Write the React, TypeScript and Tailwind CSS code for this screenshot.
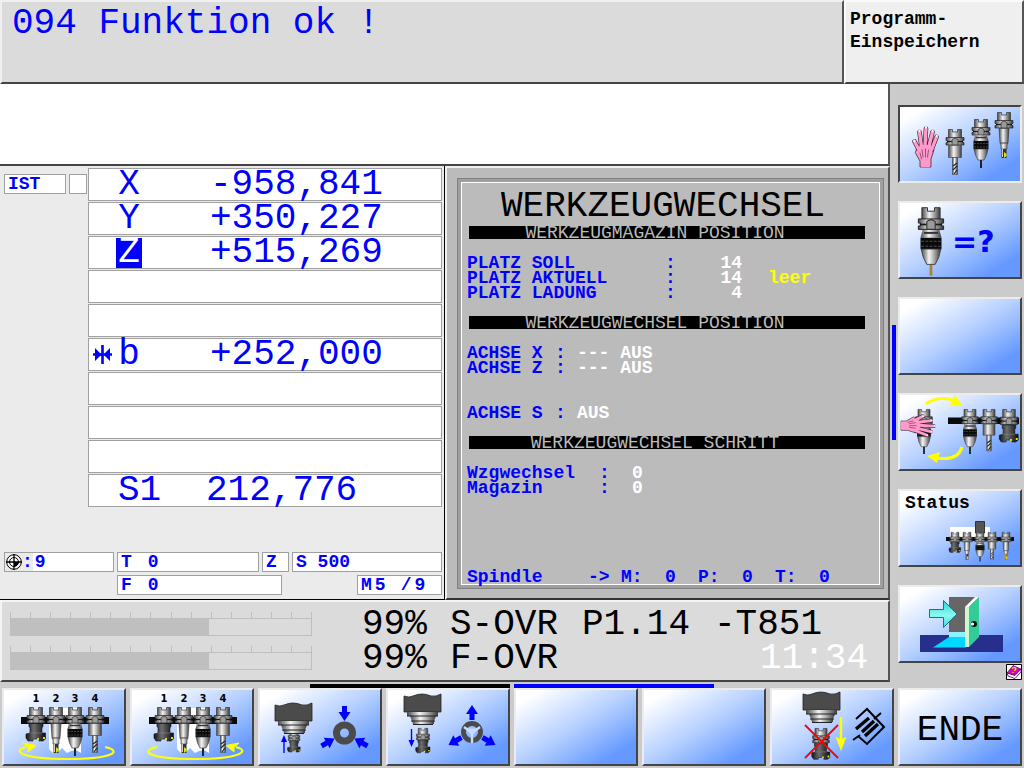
import React from "react";

type ToolProps = { x: number; y: number; s?: number; gold?: boolean };

const at = (x: number, y: number, s = 1) => `translate(${x} ${y}) scale(${s})`;

function ToolDefs() {
  return (
    <svg className="absolute h-0 w-0" aria-hidden="true">
      <defs>
        <linearGradient id="metal">
          <stop offset="0" stopColor="#4a4a4a" />
          <stop offset="0.2" stopColor="#9a9a9a" />
          <stop offset="0.4" stopColor="#f4f4f4" />
          <stop offset="0.6" stopColor="#bcbcbc" />
          <stop offset="1" stopColor="#3c3c3c" />
        </linearGradient>
        <linearGradient id="dark">
          <stop offset="0" stopColor="#141414" />
          <stop offset="0.4" stopColor="#6e6e6e" />
          <stop offset="1" stopColor="#0c0c0c" />
        </linearGradient>
        <linearGradient id="arrowCyan" x1="0" x2="0" y1="0" y2="1">
          <stop offset="0" stopColor="#1fd6d0" />
          <stop offset="0.55" stopColor="#8dfaf2" />
          <stop offset="1" stopColor="#2fe0d8" />
        </linearGradient>
      </defs>
    </svg>
  );
}

function Holder() {
  return (
    <g>
      <path d="M-6.5 0.5H-2.5V3H2.5V0.5H6.5V9H-6.5Z" fill="url(#metal)" stroke="#333" strokeWidth="0.7" />
      <path d="M-9 8.5H9V11.5H7.5V13.5H9V16H-9V13.5H-7.5V11.5H-9Z" fill="url(#metal)" stroke="#222" strokeWidth="0.7" />
      <path d="M-8 12.5H8" stroke="#1a1a1a" strokeWidth="1.2" />
      <path d="M-3 16V10.5Q0 7.5 3 10.5V16Z" fill="#9b9b9b" stroke="#333" strokeWidth="0.8" />
    </g>
  );
}

function EndMill({ x, y, s }: ToolProps) {
  return (
    <g transform={at(x, y, s)}>
      <Holder />
      <path d="M-6.5 16.5H6.5V28.5H-6.5Z" fill="url(#metal)" stroke="#444" strokeWidth="0.6" />
      <path d="M-2.5 28.5H2.5V45.5H-2.5Z" fill="url(#metal)" stroke="#444" strokeWidth="0.6" />
      <path d="M-2 37L2 34M-2 41L2 37M-1 45L2 41" stroke="#222" strokeWidth="1.2" />
    </g>
  );
}

function Chuck({ x, y, s, gold }: ToolProps) {
  return (
    <g transform={at(x, y, s)}>
      <path d="M-1 40H1V49H-1Z" fill={gold ? "#a8842c" : "#222"} />
      <Holder />
      <path d="M-6 16.5H6L7.5 22H-7.5Z" fill="url(#metal)" />
      <path d="M-5 18.5H5" stroke="#333" strokeWidth="1.4" />
      <path d="M-7.5 22H7.5V30H-7.5Z" fill="#0b0b0b" />
      <path d="M-7 24.5H7M-7 28H7" stroke="#4d4d4d" strokeWidth="0.8" strokeDasharray="2 1" />
      <path d="M-7 30H7L5.5 36L3 41H-3L-5.5 36Z" fill="url(#metal)" stroke="#333" strokeWidth="0.6" />
    </g>
  );
}

function SlimMill({ x, y, s, gold }: ToolProps) {
  return (
    <g transform={at(x, y, s)}>
      <Holder />
      <path d="M-5 16.5H5L4 31L3 33V37H-3V33L-4 31Z" fill="url(#metal)" stroke="#333" strokeWidth="0.6" />
      <path d="M-4 31H4" stroke="#444" />
      <path d="M-2.5 37H2.5V46H-2.5Z" fill={gold ? "#a0691c" : "#333"} />
      <path d="M0 40L2.5 42V44L0 46Z" fill="#e8e000" />
      <path d="M-1.5 37V45" stroke="#ccc" />
    </g>
  );
}

function FaceMill({ x, y, s }: ToolProps) {
  return (
    <g transform={at(x, y, s)}>
      <Holder />
      <path d="M-7 16.5H7V20H6V26H9.5V32L7 34H3V32H-3V34H-8L-10 31V27L-6 26V20H-7Z" fill="url(#dark)" stroke="#111" strokeWidth="0.6" />
      <path d="M-6 26H6" stroke="#888" strokeWidth="0.6" />
      <path d="M1 31H3V33H1ZM7 30H9V32H7Z" fill="#e8e000" />
    </g>
  );
}

function Hand({ transform }: { transform?: string }) {
  const fingers = "M19 43L14.500 34.500M21.500 40L19.500 25M25 39L26 21.500M29 39L32.500 25M31.500 43L36.500 30";
  const palm = "M17 41L20 37H31L34 43L31 52V60H20V54L15.500 46Z";
  return (
    <g transform={transform} strokeLinecap="round">
      <path d={palm} fill="#ff9acb" stroke="#4a2636" strokeWidth="0.8" />
      <path d={fingers} stroke="#30202a" strokeWidth="4.600" />
      <path d={fingers} stroke="#ff9acb" strokeWidth="3.400" />
      <path d="M18 42L20 38H31L33 43L30 51V60H21V53L16.500 46Z" fill="#ff9acb" />
      <path d="M22 43L23 50M25.500 42V50M28.500 43L27.500 50M20 46L21.500 52" stroke="#7c3e5c" strokeWidth="0.8" />
      <path d="M14.300 33.500V34M19.400 23.800V24.300M26 20V20.500M32.600 23.800V24.300M36.800 28.800V29.300" stroke="#fff" strokeWidth="2" />
    </g>
  );
}

function Icon({ children }: { children: React.ReactNode }) {
  return (
    <svg viewBox="0 0 120 74" className="h-[74px] w-[120px] shrink-0" fill="none" aria-hidden="true">
      {children}
    </svg>
  );
}

function Key({ label, pressed, children }: { label: string; pressed?: boolean; children?: React.ReactNode }) {
  return (
    <button
      type="button"
      aria-label={label}
      aria-pressed={pressed}
      className={
        "relative flex h-[78px] w-full min-w-0 items-center justify-center overflow-hidden border-2 bg-linear-to-br from-white from-10% via-[#b5cfff] via-50% to-[#6699ff] to-85% " +
        (pressed
          ? "border-t-[#444444] border-r-[#ececec] border-b-[#ececec] border-l-[#444444]"
          : "border-t-[#ececec] border-r-[#444444] border-b-[#444444] border-l-[#ececec]")
      }
    >
      {children}
    </button>
  );
}

function Magazine({ clockwise }: { clockwise: boolean }) {
  return (
    <Icon>
      <path d="M45 18H77V63L72 60L67 61L63 63L58 58L54 62L49 63L45 59Z" fill="#fff" />
      <path d="M17 27H105V34H17Z" fill="#0a0a0a" />
      <FaceMill x={32} y={17} />
      <SlimMill x={52} y={17} />
      <Chuck x={71} y={17} />
      <EndMill x={91} y={17} />
      <g fill="#000" fontFamily="DejaVu Sans" fontWeight="700" fontSize="10" textAnchor="middle">
        <text x="32" y="12">1</text>
        <text x="52" y="12">2</text>
        <text x="71" y="12">3</text>
        <text x="91" y="12">4</text>
      </g>
      <g transform={clockwise ? undefined : "translate(126 0) scale(-1 1)"}>
        <path d="M101 57C119 61 110 69 63 69C18 69 7 61 22 57" stroke="#ffff00" strokeWidth="2.200" />
        <path d="M19 53L32 55.500L24 62L24 57.500Z" fill="#ffff00" stroke="#ffff00" />
      </g>
    </Icon>
  );
}

function Spindle({ x, y }: { x: number; y: number }) {
  return (
    <g transform={at(x, y)}>
      <path d="M0 2Q5 4 9 2Q18 -2 27 2Q32 3 37 0V18H0Z" fill="#4b4b4b" stroke="#222" strokeWidth="0.8" />
      <path d="M3 18H34V22H3Z" fill="url(#metal)" />
      <path d="M6 22H32L30 27H8Z" fill="url(#metal)" />
      <path d="M8 27H30V30H9Z" fill="url(#metal)" />
      <path d="M3 22H34M7 27H31M9 30.500H29" stroke="#222" />
    </g>
  );
}

function BlockArrow({ x, y, turn }: { x: number; y: number; turn: number }) {
  return <path transform={`translate(${x} ${y}) rotate(${turn})`} d="M0 0L6 -9H2.500V-15H-2.500V-9H-6Z" fill="#0000ff" />;
}

const mono = "font-['Liberation_Mono','Courier_New',monospace]";
const field = "flex h-5 items-center border border-[#a0a0a0] bg-white whitespace-pre";

type Axis = { name?: string; value?: string; active?: boolean; clamped?: boolean; spindle?: boolean };

const axes: Axis[] = [
  { name: "X", value: "-958,841" },
  { name: "Y", value: "+350,227" },
  { name: "Z", value: "+515,269", active: true },
  {},
  {},
  { name: "b", value: "+252,000", clamped: true },
  {},
  {},
  {},
  { name: "S1", value: "212,776", spindle: true },
];

function AxisRow({ name, value, active, clamped, spindle }: Axis) {
  return (
    <div className="mb-px flex h-[33px] items-center border border-[#a0a0a0] bg-white text-[36px] leading-[30px] text-[#0000ff]">
      <span className="flex w-[27px] justify-center">
        {clamped && (
          <svg viewBox="0 0 19 19" className="h-[19px] w-[19px]" aria-hidden="true">
            <path d="M9.500 0V19M0 9.500H19" stroke="#0000ff" strokeWidth="2.600" />
            <path d="M2 3L8.500 9.500L2 16ZM17 3L10.500 9.500L17 16Z" fill="#0000ff" />
          </svg>
        )}
      </span>
      <span className={spindle ? "w-[90px] pl-0.5" : "w-[94px]"}>
        {name && (
          <span className={active ? "inline-block w-[26px] bg-[#0000ff] text-center text-white" : "inline-block min-w-[26px] text-center"}>
            {name}
          </span>
        )}
      </span>
      <span>{value}</span>
    </div>
  );
}

function Banner({ children }: { children: string }) {
  return (
    <h2 className="mr-[14px] ml-0.5 flex h-[13px] items-center justify-center bg-black pt-0.5 pr-6 text-[18px] leading-[13px] font-normal whitespace-pre text-[#bbbbbb]">
      {children}
    </h2>
  );
}

function Place({ label, value, note }: { label: string; value: string; note?: string }) {
  return (
    <div className="grid grid-cols-[198px_22px_55px_26px_1fr]">
      <span>{label}</span>
      <span>:</span>
      <span className="text-right text-white">{value}</span>
      <span />
      <span className="text-[#ffff00]">{note}</span>
    </div>
  );
}

function AxisState({ label, value }: { label: string; value: string }) {
  return (
    <div className="grid grid-cols-[88px_22px_1fr]">
      <span>{label}</span>
      <span>:</span>
      <span className="text-white">{value}</span>
    </div>
  );
}

function StepState({ label, value }: { label: string; value: string }) {
  return (
    <div className="grid grid-cols-[132px_33px_1fr]">
      <span>{label}</span>
      <span>:</span>
      <span className="text-white">{value}</span>
    </div>
  );
}

function SpindleValue({ label, value }: { label: string; value: string }) {
  return (
    <span className="flex w-[77px]">
      <span className="w-11">{label}</span>
      <span>{value}</span>
    </span>
  );
}

function Gauge({ label, value }: { label: string; value: number }) {
  return (
    <div role="meter" aria-label={label} aria-valuenow={value} aria-valuemin={0} aria-valuemax={150} className="w-[302px]">
      <div className="flex h-[6px] justify-between">
        {Array.from({ length: 16 }, (_, i) => (
          <span key={i} className="w-px bg-[#bfbfbf]" />
        ))}
      </div>
      <div className="h-[18px] border border-[#bfbfbf]">
        <div className="h-full bg-[#bfbfbf]" style={{ width: `${(value / 150) * 100}%` }} />
      </div>
    </div>
  );
}

export default function App() {
  return (
    <div className={`${mono} flex min-h-screen w-full flex-col bg-[#cbcbcb] text-black`}>
      <ToolDefs />

      <header className="flex h-[84px] w-full">
        <div className="flex-1 border-t-2 border-r-2 border-b-2 border-l-2 border-t-[#f0f0f0] border-r-[#555555] border-b-[#444444] border-l-[#f0f0f0] bg-[#dbdbdb] pt-1 pl-2.5">
          <h1 className="text-[36px] leading-[36px] whitespace-pre text-[#0000ff]">094 Funktion ok !</h1>
        </div>
        <div className="w-[180px] border-t-2 border-r-2 border-b-2 border-l-2 border-t-[#fafafa] border-r-[#555555] border-b-[#444444] border-l-[#fafafa] bg-[#efefef] pt-1.5 pl-1 text-[18px] leading-[23px] font-bold">
          Programm-
          <br />
          Einspeichern
        </div>
      </header>

      <div className="flex w-full">
        <main className="flex min-w-0 flex-1 flex-col">
          <div className="h-[82px] border-r-2 border-b-2 border-r-[#555555] border-b-[#444444] bg-white" />

          <div className="grid grid-cols-2">
            <section className="flex min-w-0 flex-col border-r border-b border-black bg-[#ebebeb] pt-0.5 pb-1" aria-label="Positionsanzeige">
              <div className="flex pr-0.5">
                <div className="flex w-[88px] gap-[3px] pt-1.5 pl-1">
                  <div className={`${field} w-[62px] pl-[3px] text-[18px] font-bold text-[#0000ff]`}>IST</div>
                  <div className={`${field} w-[18px]`} />
                </div>
                <div className="flex-1">
                  {axes.map((a, i) => (
                    <AxisRow key={i} {...a} />
                  ))}
                </div>
              </div>
              <div className="mt-11 flex flex-col gap-[3px] pr-0.5 pl-1 text-[18px] leading-[18px] font-bold text-[#0000ff]">
                <div className="flex gap-[3px]">
                  <div className={`${field} w-[110px]`}>
                    <span className="flex h-full items-center bg-[#ebebeb] pl-px">
                      <svg viewBox="0 0 16 16" className="h-4 w-4" fill="none" aria-hidden="true">
                        <circle cx="8" cy="8" r="7.300" stroke="#000" fill="#fff" />
                        <circle cx="8" cy="8" r="4.500" stroke="#000" />
                        <path d="M8 8H12.500A4.500 4.500 0 0 1 8 12.500Z" fill="#000" />
                        <path d="M8 0V16M0 8H16" stroke="#000" strokeWidth="1.300" />
                      </svg>
                      <span>:</span>
                    </span>
                    <span className="pl-0.5">9</span>
                  </div>
                  <div className={`${field} w-[142px] gap-4 pl-[3px]`}>
                    <span>T</span>
                    <span>0</span>
                  </div>
                  <div className={`${field} w-[27px] pl-[3px]`}>Z</div>
                  <div className={`${field} flex-1 pl-[3px]`}>S 500</div>
                </div>
                <div className="flex justify-between pl-[113px]">
                  <div className={`${field} w-[165px] gap-4 pl-[3px]`}>
                    <span>F</span>
                    <span>0</span>
                  </div>
                  <div className={`${field} w-[85px] gap-[3px] pl-[3px]`}>
                    <span>M</span>
                    <span>5</span>
                    <span className="pl-[12px]">/</span>
                    <span>9</span>
                  </div>
                </div>
              </div>
            </section>

            <section className="flex min-w-0 flex-col border-2 border-t-[#f0f0f0] border-r-[#555555] border-b-[#333333] border-l-[#f0f0f0] bg-[#bbbbbb] pt-2.5 pr-1 pb-[9px] pl-2.5" aria-label="Werkzeugwechsel">
              <div className="flex flex-1 border border-[#808080] bg-[#9f9f9f] p-[3px]">
                <div className="min-w-0 flex-1 border border-white bg-[#bbbbbb] pl-[5px] text-[18px] leading-[15px] font-bold text-[#0000ff]">
                  <div className="h-[43px] pt-[7px] pl-[34px] text-[36px] leading-[34px] font-normal text-black">WERKZEUGWECHSEL</div>
                  <Banner>WERKZEUGMAGAZIN POSITION</Banner>
                  <div className="pt-[17px]">
                    <Place label="PLATZ SOLL" value="14" />
                    <Place label="PLATZ AKTUELL" value="14" note="leer" />
                    <Place label="PLATZ LADUNG" value="4" />
                  </div>
                  <div className="pt-[15px]">
                    <Banner>WERKZEUGWECHSEL POSITION</Banner>
                  </div>
                  <div className="pt-[17px]">
                    <AxisState label="ACHSE X" value="--- AUS" />
                    <AxisState label="ACHSE Z" value="--- AUS" />
                  </div>
                  <div className="pt-[30px]">
                    <AxisState label="ACHSE S" value="AUS" />
                  </div>
                  <div className="pt-[15px]">
                    <Banner>WERKZEUGWECHSEL SCHRITT</Banner>
                  </div>
                  <div className="pt-[17px]">
                    <StepState label="Wzgwechsel" value="0" />
                    <StepState label="Magazin" value="0" />
                  </div>
                  <div className="flex pt-[75px] leading-[13px]">
                    <span className="w-[121px]">Spindle</span>
                    <span className="w-[33px]">-&gt;</span>
                    <SpindleValue label="M:" value="0" />
                    <SpindleValue label="P:" value="0" />
                    <SpindleValue label="T:" value="0" />
                  </div>
                </div>
              </div>
            </section>
          </div>

          <section className="flex border-2 border-t-[#f4f4f4] border-r-[#555555] border-b-[#444444] border-l-[#f4f4f4] bg-[#dbdbdb] pb-1 pl-2" aria-label="Override">
            <div className="flex w-[352px] flex-col gap-[10px] pt-2.5">
              <Gauge label="S-OVR" value={99} />
              <Gauge label="F-OVR" value={99} />
            </div>
            <div className="grid flex-1 grid-cols-[88px_132px_132px_1fr] pt-1.5 text-[36px] leading-[34px] whitespace-pre">
              <span>99%</span>
              <span>S-OVR</span>
              <span>P1.14</span>
              <span>-T851</span>
              <span>99%</span>
              <span>F-OVR</span>
              <time className="col-span-2 pr-5 text-right text-white">11:34</time>
            </div>
          </section>

          <div className="flex gap-1 pt-0.5 pl-[310px]">
            <span className="h-1 w-[200px] bg-black" />
            <span className="h-1 w-[200px] bg-[#0000ff]" />
          </div>
        </main>

        <aside className="flex w-[134px] pr-0.5 pb-2">
          <div className="w-2 pt-[241px] pl-0.5">
            <div className="h-[115px] w-1 bg-[#0000ff]" />
          </div>
          <div className="flex flex-1 flex-col gap-[18px] pt-[21px]">
            <Key label="Werkzeuge von Hand" pressed>
              <Icon>
                <Hand />
                <EndMill x={55} y={22} />
                <Chuck x={81} y={12} />
                <SlimMill x={104} y={5} />
              </Icon>
            </Key>
            <Key label="Werkzeug abfragen">
              <svg viewBox="0 0 50 74" className="h-[74px] w-[50px] shrink-0" fill="none" aria-hidden="true">
                <Chuck x={31} y={4} s={1.4} gold />
              </svg>
              <span className="flex-1 pt-1 pl-0.5 text-left font-['DejaVu_Sans',sans-serif] text-[30px] leading-[36px] font-bold text-[#0000ff]">=?</span>
            </Key>
            <Key label="Frei" />
            <Key label="Werkzeug von Hand wechseln">
              <Icon>
                <path d="M48 22.500H119V29H48Z" fill="#0a0a0a" />
                <Chuck x={24} y={14} s={0.92} />
                <Hand transform="translate(52 9) rotate(90) scale(.85)" />
                <Chuck x={70} y={14} s={0.92} />
                <EndMill x={89} y={14} s={0.92} />
                <FaceMill x={109} y={14} s={0.97} />
                <path d="M26 9Q39 0 55 6M62 52Q58 66 38 63" stroke="#ffff00" strokeWidth="3" />
                <path d="M55 0L62 10L50 10ZM27 61L40 57L37 68Z" fill="#ffff00" />
              </Icon>
            </Key>
            <Key label="Status">
              <Icon>
                <path d="M50 36H90V46H50Z" fill="#fff" />
                <path d="M75.500 30.500H84.500V42H75.500Z" fill="#555" stroke="#333" />
                <path d="M46 46H114V50H46Z" fill="#0a0a0a" />
                <FaceMill x={55} y={41} s={0.6} />
                <SlimMill x={67} y={41} s={0.6} />
                <Chuck x={80} y={41} s={0.6} />
                <EndMill x={92} y={41} s={0.6} />
                <SlimMill x={106} y={41} s={0.6} gold />
              </Icon>
              <span className="absolute top-0.5 left-[5px] text-[18px] leading-5 font-bold">Status</span>
            </Key>
            <div className="flex flex-col items-end">
              <Key label="Verlassen">
                <Icon>
                  <path d="M20 48H103V65H20Z" fill="#26308c" />
                  <path d="M49 10H79V45H49Z" fill="#666" />
                  <path d="M49 45H66V50H49Z" fill="#8ff0ff" />
                  <path d="M49 50H66V60.500H33Z" fill="#00d8ff" />
                  <path d="M65 20L75 10H79L69 20Z" fill="#fff" />
                  <path d="M65 20H69V60H65Z" fill="#cdf7cf" />
                  <path d="M69 20L79 10.500V50L69 60Z" fill="#33cc99" />
                  <circle cx="74" cy="37" r="3" fill="#111" />
                  <circle cx="72.500" cy="37" r="1.600" fill="#fff" />
                  <path d="M29.500 22.500H43.500V13.500L57 27L43.500 40.500V30.500H29.500Z" fill="url(#arrowCyan)" stroke="#2a6a86" />
                </Icon>
              </Key>
              <svg viewBox="0 0 16 16" className="mt-px h-4 w-4" fill="none" aria-label="Hilfe">
                <path d="M0.500 0.500H15.500V15.500H0.500Z" fill="#fff" stroke="#000" />
                <path d="M1 9L7 1.500L15 5L9 11.500Z" fill="#d400c8" stroke="#400040" strokeWidth="0.600" />
                <path d="M1 9L9 11.500L15 5V8L9 14.500L2 12Z" fill="#fff" stroke="#700070" strokeWidth="0.900" />
                <path d="M6 4.500Q9 2.500 10 4.500Q10 6 8 6.500M7 8V9" stroke="#ffee00" strokeWidth="1.200" />
              </svg>
            </div>
          </div>
        </aside>
      </div>

      <nav className="grid grid-cols-8 gap-1 px-0.5" aria-label="Softkeys">
        <Key label="Magazin links drehen">
          <Magazine clockwise />
        </Key>
        <Key label="Magazin rechts drehen">
          <Magazine clockwise={false} />
        </Key>
        <Key label="Werkzeug spannen">
          <Icon>
            <FaceMill x={34} y={40} s={0.65} />
            <Spindle x={15} y={13} />
            <path d="M24 63V50" stroke="#0000ff" strokeWidth="1.400" />
            <path d="M24 45L27 52H21Z" fill="#0000ff" />
            <circle cx="84.500" cy="43" r="8" stroke="#4b4b4b" strokeWidth="7" />
            <BlockArrow x={84.5} y={31} turn={0} />
            <BlockArrow x={74.5} y={48.5} turn={-120} />
            <BlockArrow x={94.5} y={48.5} turn={120} />
          </Icon>
        </Key>
        <Key label="Werkzeug lösen">
          <Icon>
            <FaceMill x={35} y={38} s={0.73} />
            <Spindle x={16} y={4} />
            <path d="M23.500 39V52" stroke="#0000ff" strokeWidth="1.400" />
            <path d="M23.500 57L20.500 50H26.500Z" fill="#0000ff" />
            <circle cx="84" cy="42" r="8.500" stroke="#4b4b4b" strokeWidth="5" />
            <path d="M84 43L76 37M84 43L92 37M84 43V53" stroke="#c8dcff" strokeWidth="2.400" />
            <path d="M84 43L79 38.500H89ZM84 47L81 42H87Z" fill="#c8dcff" />
            <BlockArrow x={84} y={15} turn={180} />
            <BlockArrow x={60.5} y={55} turn={60} />
            <BlockArrow x={107.5} y={55} turn={-60} />
          </Icon>
        </Key>
        <Key label="Frei" />
        <Key label="Frei" />
        <Key label="Werkzeug gesperrt">
          <Icon>
            <FaceMill x={49} y={38} s={0.92} />
            <Spindle x={31} y={2} />
            <path d="M33 35L66 68M66 35L33 68" stroke="#ff0000" strokeWidth="1.800" />
            <path d="M69 27V50" stroke="#ffff00" strokeWidth="2.400" />
            <path d="M69 61L63.500 47L69 49L74.500 47Z" fill="#ffff00" />
            <path d="M84 29L95 19L112 37L95 54L86 46M102 29L109 23M81 50L88 45" stroke="#000" strokeWidth="2" />
            <path d="M84 39L97 28M93 46L106 34M90 42L102 31" stroke="#000" strokeWidth="3.400" />
          </Icon>
        </Key>
        <Key label="ENDE">
          <span className="pt-2 text-[36px] leading-[40px]">ENDE</span>
        </Key>
      </nav>
    </div>
  );
}
